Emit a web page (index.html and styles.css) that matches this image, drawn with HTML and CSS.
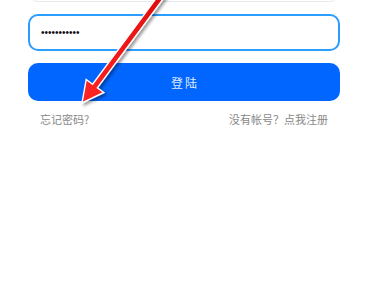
FILE: index.html
```html
<!DOCTYPE html>
<html lang="zh-CN">
<head>
    <meta charset="UTF-8">
    <meta name="viewport" content="width=device-width, initial-scale=1.0">
    <title>登陆</title>
    <link rel="stylesheet" href="styles.css">
</head>
<body>

    <div class="login">
        <!-- Username (scrolled mostly out of view) -->
        <input class="field field-user" type="text" placeholder="请输入帐号">

        <!-- Password -->
        <input class="field field-pass" type="password" value="12345678901">

        <button class="btn-login">登陆</button>

        <div class="links">
            <a href="#">忘记密码?</a>
            <a href="#">没有帐号？点我注册</a>
        </div>
    </div>

    <!-- Annotation arrow -->
    <svg class="arrow" width="369" height="299" viewBox="0 0 369 299">
        <defs>
            <linearGradient id="red" x1="0" y1="0" x2="1" y2="0">
                <stop offset="0" stop-color="#ff2626"/>
                <stop offset="1" stop-color="#dd0a0a"/>
            </linearGradient>
            <filter id="shadow" x="-20%" y="-20%" width="140%" height="140%">
                <feDropShadow dx="2" dy="2" stdDeviation="1.6" flood-color="#000" flood-opacity="0.4"/>
            </filter>
        </defs>
        <polygon points="82,103 86.2,79.5 92.6,84.2 163.6,-11.8 168.4,-8.2 97.4,87.8 103.8,92.5"
                 fill="url(#red)" stroke="#fff" stroke-width="1.4" stroke-linejoin="miter"
                 filter="url(#shadow)"/>
    </svg>

</body>
</html>
```

FILE: styles.css
```css
/* Page */
body {
    margin: 0;
    background: #fff;
    font-family: 'Noto Sans CJK SC', 'Noto Sans', sans-serif;
    position: relative;
    overflow: hidden;
    height: 299px;
}

.login {
    margin: 0 29px 0 28px;
    display: flex;
    flex-direction: column;
}

/* Inputs */
.field {
    box-sizing: border-box;
    width: 100%;
    height: 37px;
    padding: 0 11px;
    border-radius: 10px;
    background: #fff;
    outline: none;
}

.field-user {
    margin-top: -35px;
    border: 1px solid #e6eaec;
}

.field-pass {
    margin-top: 12px;
    border: 2px solid #2a9dff;
    font-family: 'Liberation Sans', Arial, sans-serif;
    font-size: 10px;
    color: #111;
}

/* Button */
.btn-login {
    margin-top: 12px;
    height: 38px;
    border: none;
    border-radius: 10px;
    background: #0066ff;
    color: rgba(255, 255, 255, 0.88);
    font-family: inherit;
    font-size: 12px;
    letter-spacing: 2px;
    text-indent: 2px;
    cursor: pointer;
}

/* Links */
.links {
    display: flex;
    justify-content: space-between;
    padding: 0 12px;
    margin-top: 10px;
}

.links a {
    font-size: 11px;
    line-height: 16px;
    color: #888;
    text-decoration: none;
}

/* Arrow overlay */
.arrow {
    position: absolute;
    left: 0;
    top: 0;
    pointer-events: none;
}
```
